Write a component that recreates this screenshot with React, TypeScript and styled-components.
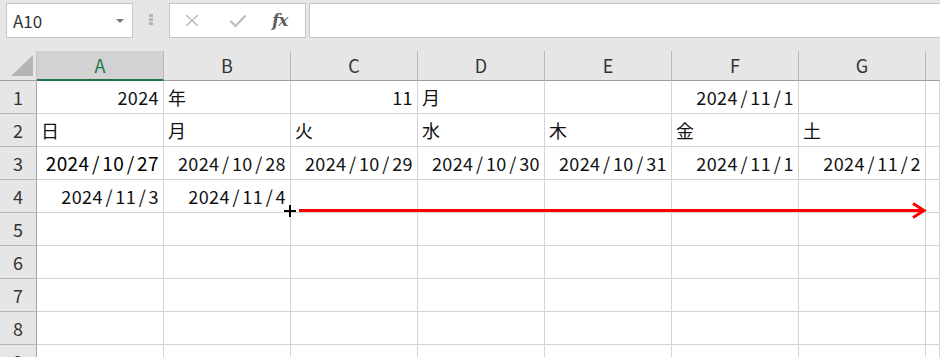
import React from 'react';
import styled, { createGlobalStyle } from 'styled-components';

const GlobalStyle = createGlobalStyle`
  html, body {
    margin: 0;
    padding: 0;
    background: #ffffff;
    overflow: hidden;
  }
  body {
    font-family: "Noto Sans CJK JP", "Noto Sans", sans-serif;
  }
`;

type Align = 'left' | 'right';
type CellData = { text: string; align?: Align; big?: boolean };

const columns = ['A', 'B', 'C', 'D', 'E', 'F', 'G'];

const rows: CellData[][] = [
    [
        { text: '2024', align: 'right' },
        { text: '年' },
        { text: '11', align: 'right' },
        { text: '月' },
        { text: '' },
        { text: '2024/11/1', align: 'right' },
        { text: '' },
    ],
    ['日', '月', '火', '水', '木', '金', '土'].map(t => ({ text: t })),
    [
        { text: '2024/10/27', align: 'right', big: true },
        { text: '2024/10/28', align: 'right' },
        { text: '2024/10/29', align: 'right' },
        { text: '2024/10/30', align: 'right' },
        { text: '2024/10/31', align: 'right' },
        { text: '2024/11/1', align: 'right' },
        { text: '2024/11/2', align: 'right' },
    ],
    [
        { text: '2024/11/3', align: 'right' },
        { text: '2024/11/4', align: 'right' },
    ],
    [], [], [], [], [],
];

const renderValue = (text: string) => {
    const parts = text.split('/')
    return parts.map((p, i) => (
        <React.Fragment key={i}>
            {i > 0 && <Slash>/</Slash>}
            {p}
        </React.Fragment>
    ))
}

function App() {
    return (
        <>
            <GlobalStyle/>
            <Toolbar>
                <NameBox>
                    A10
                    <DropArrow/>
                </NameBox>
                <Dots>
                    <span/><span/><span/>
                </Dots>
                <FormulaButtons>
                    <svg width="16" height="13" viewBox="0 0 16 13">
                        <path d="M2 1 L14 12 M14 1 L2 12" stroke="#bcbcbc" strokeWidth="1.6" fill="none"/>
                    </svg>
                    <svg width="18" height="14" viewBox="0 0 18 14">
                        <path d="M1.5 7 L6.5 12 L16.5 1.5" stroke="#bcbcbc" strokeWidth="2.2" fill="none"/>
                    </svg>
                    <Fx>fx</Fx>
                </FormulaButtons>
                <FormulaInput/>
            </Toolbar>
            <Sheet>
                <Corner>
                    <Triangle/>
                </Corner>
                {columns.map(c => (
                    <ColHeader key={c} $selected={c === 'A'}>{c}</ColHeader>
                ))}
                <ColHeader $last/>
                {rows.map((row, r) => (
                    <React.Fragment key={r}>
                        <RowHeader>{r + 1}</RowHeader>
                        {columns.map((c, i) => {
                            const cell = row[i]
                            return (
                                <Cell key={c} $align={cell?.align ?? 'left'} $big={cell?.big}>
                                    {cell ? renderValue(cell.text) : null}
                                </Cell>
                            )
                        })}
                        <Cell $align="left"/>
                    </React.Fragment>
                ))}
                <FillArrow width="660" height="22" viewBox="0 0 660 22">
                    <path d="M2 10 H14 M8 4 V16" stroke="#000" strokeWidth="2" fill="none"/>
                    <path d="M17 9.5 H642" stroke="#ff0000" strokeWidth="3" fill="none"/>
                    <path d="M631 2.5 L642 9.5 L631 16.5" stroke="#ff0000" strokeWidth="3" fill="none"/>
                </FillArrow>
            </Sheet>
        </>
    );
}

export default App;

const Toolbar = styled.div`
  height: 51px;
  box-sizing: border-box;
  padding: 3px 0 0 6px;
  background: #e6e6e6;
  display: flex;
  align-items: flex-start;
`
const NameBox = styled.div`
  width: 127px;
  height: 35px;
  box-sizing: border-box;
  border: 1px solid #c6c6c6;
  background: #ffffff;
  display: flex;
  align-items: center;
  justify-content: space-between;
  padding: 0 8px 0 6px;
  font-size: 17px;
  color: #333333;
`
const DropArrow = styled.div`
  width: 0;
  height: 0;
  border-left: 4px solid transparent;
  border-right: 4px solid transparent;
  border-top: 4px solid #777777;
  margin-top: 1px;
`
const Dots = styled.div`
  width: 4px;
  margin: 11px 16px 0 16px;
  display: flex;
  flex-direction: column;
  gap: 1px;

  span {
    width: 4px;
    height: 3px;
    background: #b4b4b4;
  }
`
const FormulaButtons = styled.div`
  width: 137px;
  height: 35px;
  box-sizing: border-box;
  border: 1px solid #c6c6c6;
  background: #ffffff;
  display: flex;
  align-items: center;
  padding: 0 0 0 14px;
  gap: 29px;
`
const Fx = styled.span`
  font-family: "DejaVu Serif", "Liberation Serif", serif;
  font-style: italic;
  font-weight: bold;
  font-size: 17px;
  color: #606060;
  letter-spacing: -1px;
  margin-left: -4px;
  margin-top: -2px;
`
const FormulaInput = styled.div`
  flex: 1;
  height: 35px;
  margin-left: 3px;
  box-sizing: border-box;
  border: 1px solid #c6c6c6;
  border-right: none;
  background: #ffffff;
`
const Sheet = styled.div`
  position: relative;
  display: grid;
  grid-template-columns: 37px repeat(7, 127px) 1fr;
  grid-template-rows: 30px repeat(9, 33px);
`
const Corner = styled.div`
  box-sizing: border-box;
  background: #e6e6e6;
  border-right: 1px solid #c4c4c4;
  border-bottom: 1px solid #9f9f9f;
  display: flex;
  justify-content: flex-end;
  align-items: flex-end;
  padding: 0 3px 4px 0;
`
const Triangle = styled.div`
  width: 22px;
  height: 21px;
  background: #b4b4b4;
  clip-path: polygon(100% 0, 100% 100%, 0 100%);
`
const ColHeader = styled.div<{ $selected?: boolean; $last?: boolean }>`
  box-sizing: border-box;
  background: ${p => p.$selected ? '#d2d2d2' : '#e6e6e6'};
  border-right: ${p => p.$last ? 'none' : '1px solid #b8b8b8'};
  border-bottom: ${p => p.$selected ? '2px solid #217346' : '1px solid #9f9f9f'};
  color: ${p => p.$selected ? '#217346' : '#333333'};
  font-size: 18px;
  line-height: 1;
  display: flex;
  align-items: center;
  justify-content: center;
  padding-bottom: ${p => p.$selected ? '1px' : '2px'};
`
const RowHeader = styled.div`
  box-sizing: border-box;
  background: #e6e6e6;
  border-right: 1px solid #a6a6a6;
  border-bottom: 1px solid #b4b4b4;
  color: #333333;
  font-size: 18px;
  line-height: 1;
  display: flex;
  align-items: center;
  justify-content: center;
`
const Cell = styled.div<{ $align: Align; $big?: boolean }>`
  box-sizing: border-box;
  border-right: 1px solid #d4d4d4;
  border-bottom: 1px solid #d4d4d4;
  display: flex;
  align-items: flex-end;
  justify-content: ${p => p.$align === 'right' ? 'flex-end' : 'flex-start'};
  padding: 0 4px 7px 4px;
  font-size: ${p => p.$big ? '19px' : '18px'};
  line-height: 1;
  color: ${p => p.$big ? '#000000' : '#111111'};
  letter-spacing: 0.4px;
  white-space: nowrap;
  overflow: visible;
`
const Slash = styled.span`
  margin: 0 2.5px;
`
const FillArrow = styled.svg`
  position: absolute;
  left: 282px;
  top: 150px;
  pointer-events: none;
`
